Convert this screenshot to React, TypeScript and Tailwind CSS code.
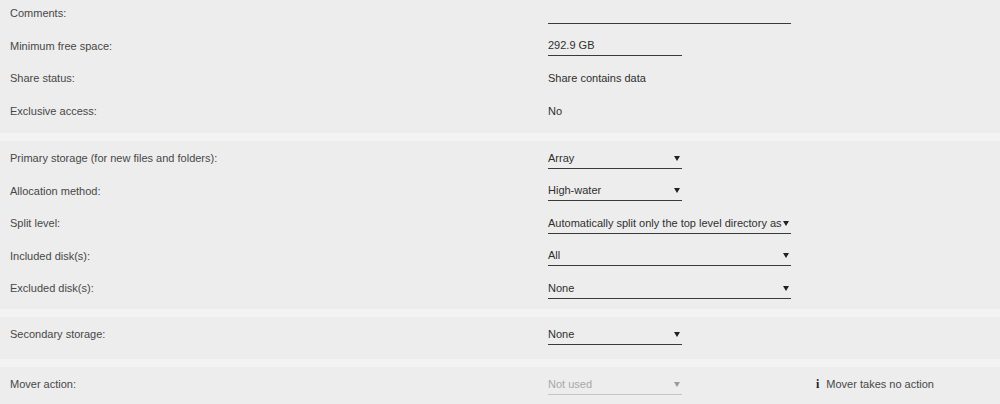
import React from 'react';

const font = { fontFamily: '"Liberation Sans", Arial, sans-serif' };

const Arrow: React.FC<{ muted?: boolean }> = ({ muted }) => (
  <svg width="6" height="6" viewBox="0 0 6 6" className="shrink-0">
    <path d="M0 1 L6 1 L3 6 Z" fill={muted ? '#9a9a9a' : '#222'} />
  </svg>
);

const Row: React.FC<{ label: string; children?: React.ReactNode }> = ({ label, children }) => (
  <div className="flex h-[32.5px] items-center">
    <div className="w-[548px] shrink-0 pl-[10px] text-[#474747]">{label}</div>
    <div className="flex items-center">{children}</div>
  </div>
);

const Select: React.FC<{ value: string; wide?: boolean; muted?: boolean }> = ({ value, wide, muted }) => (
  <div
    className={`flex h-[21px] items-center gap-[1px] border-b pr-[2px] ${wide ? 'w-[243px]' : 'w-[134px]'} ${
      muted ? 'border-[#c4c4c4] text-[#a8a8a8]' : 'border-[#3a3a3a] text-[#2f2f2f]'
    }`}
  >
    <span className="flex-1 overflow-hidden whitespace-nowrap">{value}</span>
    <Arrow muted={muted} />
  </div>
);

const Input: React.FC<{ value?: string; wide?: boolean }> = ({ value, wide }) => (
  <div className={`flex h-[21px] items-center border-b border-[#3a3a3a] text-[#2f2f2f] ${wide ? 'w-[243px]' : 'w-[134px]'}`}>
    {value}
  </div>
);

export default function App() {
  return (
    <div className="h-[404px] w-[1000px] overflow-hidden bg-[#f3f3f3] text-[11px]" style={font}>
      <div className="h-[133px] overflow-hidden bg-[#ededed]">
        <div className="-mt-[3px]">
          <Row label="Comments:">
            <Input wide />
          </Row>
          <Row label="Minimum free space:">
            <Input value="292.9 GB" />
          </Row>
          <Row label="Share status:">
            <span className="text-[#2f2f2f]">Share contains data</span>
          </Row>
          <Row label="Exclusive access:">
            <span className="text-[#2f2f2f]">No</span>
          </Row>
        </div>
      </div>

      <div className="mt-[8px] h-[168px] bg-[#ededed] pt-[1px]">
        <Row label="Primary storage (for new files and folders):">
          <Select value="Array" />
        </Row>
        <Row label="Allocation method:">
          <Select value="High-water" />
        </Row>
        <Row label="Split level:">
          <Select value="Automatically split only the top level directory as necessary" wide />
        </Row>
        <Row label="Included disk(s):">
          <Select value="All" wide />
        </Row>
        <Row label="Excluded disk(s):">
          <Select value="None" wide />
        </Row>
      </div>

      <div className="mt-[8px] h-[42px] bg-[#ededed] pt-[1px]">
        <Row label="Secondary storage:">
          <Select value="None" />
        </Row>
      </div>

      <div className="mt-[8px] h-[40px] bg-[#ededed] pt-[1px]">
        <Row label="Mover action:">
          <Select value="Not used" muted />
          <span className="ml-[134px] flex items-center gap-[7px] text-[#474747]">
            <span className="font-bold text-[#222]" style={{ fontFamily: '"Liberation Serif", serif', fontSize: '12px' }}>
              i
            </span>
            Mover takes no action
          </span>
        </Row>
      </div>
    </div>
  );
}
